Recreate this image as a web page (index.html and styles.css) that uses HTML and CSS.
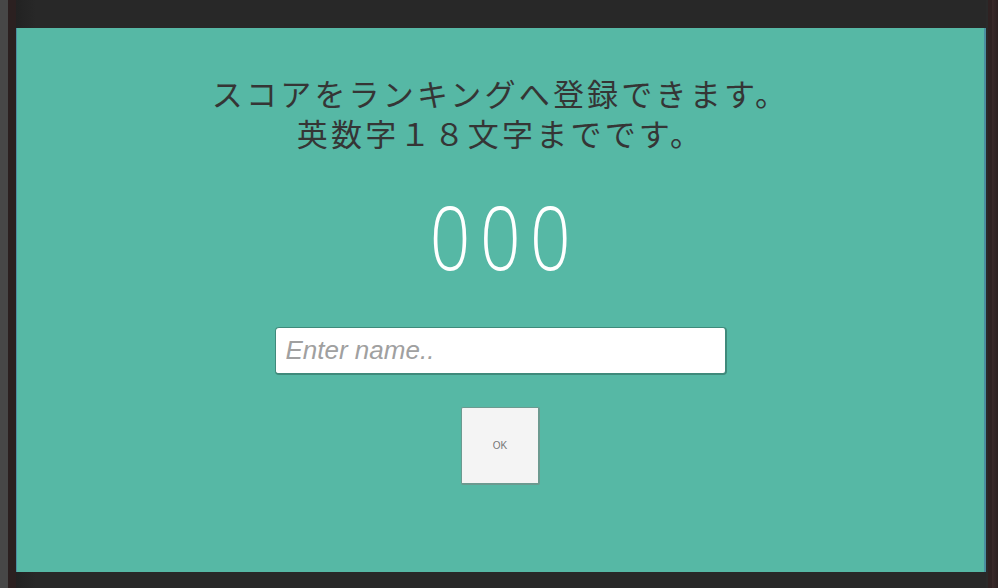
FILE: index.html
```html
<!DOCTYPE html>
<html lang="ja">
<head>
    <meta charset="UTF-8">
    <meta name="viewport" content="width=device-width, initial-scale=1.0">
    <title>ランキング登録</title>
    <link rel="stylesheet" href="styles.css">
</head>
<body>
    <div class="frame">
        <div class="edge-left"></div>
        <div class="edge-dark"></div>
        <div class="window">
            <div class="top-bar"></div>
            <div class="stage">
                <div class="message">
                    <div class="message-line">スコアをランキングへ登録できます。</div>
                    <div class="message-line">英数字１８文字までです。</div>
                </div>
                <div class="score" id="score">000</div>
                <input type="text" class="name-input" id="name" placeholder="Enter name.." maxlength="18">
                <button class="ok-btn" onclick="submitScore()">OK</button>
            </div>
            <div class="bottom-bar"></div>
        </div>
        <div class="edge-right"></div>
    </div>

    <script>
        function submitScore() {
            const name = document.getElementById('name').value;
            if (!/^[A-Za-z0-9]{1,18}$/.test(name)) {
                return;
            }
            document.getElementById('name').value = '';
        }
    </script>
</body>
</html>
```

FILE: styles.css
```css
html, body {
    margin: 0;
    padding: 0;
    height: 100%;
    background-color: #282828;
}

.frame {
    display: flex;
    height: 588px;
}

.edge-left {
    width: 8px;
    background-color: #474747;
}

.edge-dark {
    width: 8px;
    background-color: #2b2020;
}

.window {
    flex: 1;
    display: flex;
    flex-direction: column;
    background: linear-gradient(to right, #222 0, #282828 20px);
}

.top-bar {
    height: 28px;
}

.bottom-bar {
    height: 16px;
}

.stage {
    flex: 1;
    display: flex;
    flex-direction: column;
    align-items: center;
    background-color: #56b8a5;
    border-left: 1px solid #4a8ea0;
    border-right: 2px solid #4a8ea0;
}

.message {
    margin-top: 45px;
    font-family: "Noto Sans CJK JP", sans-serif;
    font-size: 31px;
    letter-spacing: 3.2px;
    color: #353535;
    text-align: center;
}

.message-line {
    height: 40px;
    line-height: 40px;
}

.score {
    margin-top: 42px;
    height: 82px;
    font-family: "Open Sans", sans-serif;
    font-weight: 300;
    font-size: 89px;
    line-height: 82px;
    letter-spacing: 12px;
    padding-left: 12px;
    color: #ffffff;
    transform: scaleX(0.8);
}

.name-input {
    margin-top: 50px;
    width: 452px;
    height: 48px;
    box-sizing: border-box;
    padding: 0 10px;
    border: 1px solid #3f8a7b;
    border-right-width: 2px;
    border-bottom-width: 2px;
    border-radius: 4px;
    background-color: #fff;
    font-family: "Liberation Sans", Arial, sans-serif;
    font-size: 26px;
    font-style: italic;
    color: #333;
    outline: none;
}

.name-input::placeholder {
    color: #a0a0a0;
}

.ok-btn {
    margin-top: 32px;
    width: 79px;
    height: 78px;
    border: 1px solid #6c9a90;
    border-right-width: 2px;
    border-bottom-width: 2px;
    border-radius: 2px;
    background-color: #f4f4f4;
    font-family: "Liberation Sans", Arial, sans-serif;
    font-size: 10px;
    color: #777;
    cursor: pointer;
}

.ok-btn:hover {
    background-color: #eaeaea;
}

.edge-right {
    width: 12px;
    background: linear-gradient(to right, #2a2a2a 0, #2a2a2a 2px, #2f2222 2px, #2f2222 6px, #3a2a2a 6px, #2b2020 100%);
}
```
